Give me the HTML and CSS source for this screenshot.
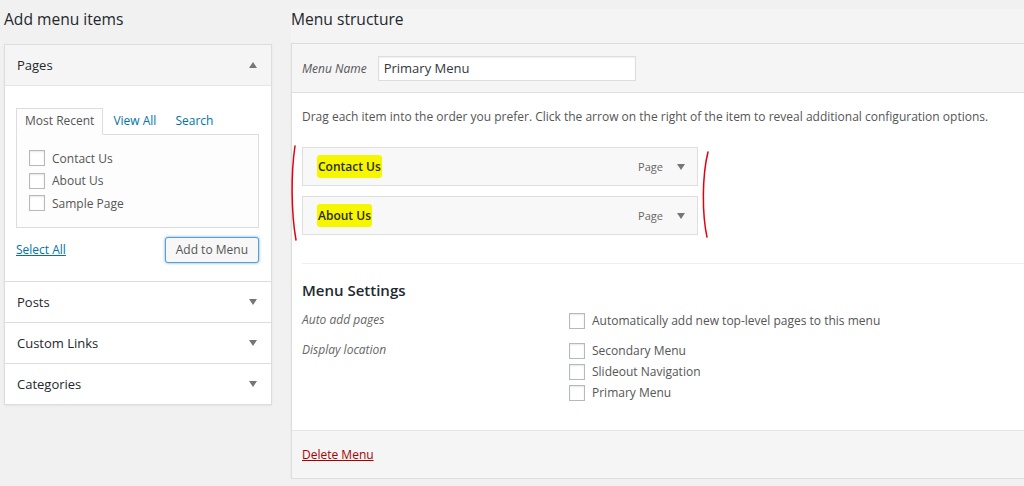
FILE: index.html
```html
<!DOCTYPE html>
<html lang="en">
<head>
    <meta charset="UTF-8">
    <title>Menus</title>
    <link rel="stylesheet" href="styles.css">
</head>
<body>
    <div class="page">
        <div class="col-left">
            <h2 class="col-title">Add menu items</h2>
            <div class="accordion">
                <div class="acc-section open">
                    <div class="acc-head">Pages <span class="arrow up"></span></div>
                    <div class="acc-body">
                        <ul class="tabs">
                            <li class="active">Most Recent</li>
                            <li><a href="#">View All</a></li>
                            <li><a href="#">Search</a></li>
                        </ul>
                        <div class="tab-panel">
                            <label class="check-row"><span class="checkbox"></span>Contact Us</label>
                            <label class="check-row"><span class="checkbox"></span>About Us</label>
                            <label class="check-row"><span class="checkbox"></span>Sample Page</label>
                        </div>
                        <div class="acc-actions">
                            <a href="#" class="select-all">Select All</a>
                            <button class="button focused">Add to Menu</button>
                        </div>
                    </div>
                </div>
                <div class="acc-section">
                    <div class="acc-head">Posts <span class="arrow"></span></div>
                </div>
                <div class="acc-section">
                    <div class="acc-head">Custom Links <span class="arrow"></span></div>
                </div>
                <div class="acc-section">
                    <div class="acc-head">Categories <span class="arrow"></span></div>
                </div>
            </div>
        </div>

        <div class="col-right">
            <h2 class="col-title">Menu structure</h2>
            <div class="menu-edit">
                <div class="menu-header">
                    <label class="menu-name-label">Menu Name</label>
                    <input type="text" class="menu-name" value="Primary Menu">
                </div>
                <div class="menu-body">
                    <p class="drag-note">Drag each item into the order you prefer. Click the arrow on the right of the item to reveal additional configuration options.</p>
                    <div class="menu-list">
                        <svg class="marks" width="430" height="110" viewBox="0 0 430 110">
                            <path d="M5,4 C1,30 1,70 6,98" />
                            <path d="M418,10 C412,34 412,72 417,95" />
                        </svg>
                        <div class="menu-item">
                            <span class="item-title"><mark>Contact Us</mark></span>
                            <span class="item-type">Page</span>
                            <span class="arrow"></span>
                        </div>
                        <div class="menu-item">
                            <span class="item-title"><mark>About Us</mark></span>
                            <span class="item-type">Page</span>
                            <span class="arrow"></span>
                        </div>
                    </div>
                    <div class="menu-settings">
                        <h3>Menu Settings</h3>
                        <div class="setting-row">
                            <span class="setting-label">Auto add pages</span>
                            <div class="setting-options">
                                <label class="check-row"><span class="checkbox"></span>Automatically add new top-level pages to this menu</label>
                            </div>
                        </div>
                        <div class="setting-row locations">
                            <span class="setting-label">Display location</span>
                            <div class="setting-options">
                                <label class="check-row"><span class="checkbox"></span>Secondary Menu</label>
                                <label class="check-row"><span class="checkbox"></span>Slideout Navigation</label>
                                <label class="check-row"><span class="checkbox"></span>Primary Menu</label>
                            </div>
                        </div>
                    </div>
                </div>
                <div class="menu-footer">
                    <a href="#" class="delete-link">Delete Menu</a>
                </div>
            </div>
        </div>
    </div>
</body>
</html>
```

FILE: styles.css
```css
body {
    margin: 0;
    background-color: #f1f1f1;
    color: #444;
    font-family: "Open Sans", "Noto Sans", sans-serif;
    font-size: 12px;
    overflow: hidden;
}

.page {
    display: flex;
    align-items: flex-start;
    width: 1100px;
}

.col-title {
    margin: 0 0 15px;
    font-size: 15.6px;
    font-weight: 400;
    line-height: 20px;
    color: #23282d;
}

/* left column */
.col-left {
    flex: none;
    width: 268px;
    margin-left: 4px;
    padding-top: 9px;
}

.accordion {
    background: #fff;
    border: 1px solid #ddd;
    box-shadow: 0 1px 2px rgba(0, 0, 0, 0.06);
}

.acc-section + .acc-section {
    border-top: 1px solid #ddd;
}

.acc-head {
    display: flex;
    align-items: center;
    justify-content: space-between;
    height: 40px;
    padding: 0 14px 0 12px;
    font-size: 13px;
    color: #23282d;
}

.open .acc-head {
    background: #f5f5f5;
    border-bottom: 1px solid #e5e5e5;
}

.arrow {
    width: 0;
    height: 0;
    border-left: 4.5px solid transparent;
    border-right: 4.5px solid transparent;
    border-top: 6px solid #72777c;
}

.arrow.up {
    border-top: none;
    border-bottom: 6px solid #72777c;
}

.acc-body {
    padding: 22px 12px 18px 11px;
}

.tabs {
    display: flex;
    margin: 0;
    padding: 0;
    list-style: none;
}

.tabs li {
    padding: 3px 8px 4px;
    border: 1px solid transparent;
    line-height: 17px;
    margin-right: 1px;
}

.tabs li.active {
    background: #fdfdfd;
    border-color: #ddd;
    border-bottom-color: #fdfdfd;
    margin-bottom: -1px;
    position: relative;
    color: #555;
}

.tabs a {
    color: #0073aa;
    text-decoration: none;
}

.tab-panel {
    background: #fdfdfd;
    border: 1px solid #ddd;
    padding: 12px 12px 12px;
}

.check-row {
    display: flex;
    align-items: center;
    height: 22.5px;
    color: #555;
}

.checkbox {
    width: 14px;
    height: 14px;
    margin-right: 7px;
    background: #fff;
    border: 1px solid #b4b9be;
    box-shadow: inset 0 1px 2px rgba(0, 0, 0, 0.1);
}

.acc-actions {
    display: flex;
    align-items: center;
    justify-content: space-between;
    margin-top: 9px;
}

.select-all {
    color: #0073aa;
    text-decoration: underline;
}

.button {
    height: 26px;
    padding: 0 10px;
    font-family: inherit;
    font-size: 12px;
    color: #555;
    background: #f7f7f7;
    border: 1px solid #5b9dd9;
    border-radius: 3px;
    box-shadow: 0 0 3px rgba(0, 115, 170, 0.6);
    cursor: pointer;
}

/* right column */
.col-right {
    flex: none;
    width: 760px;
    margin-left: 19px;
    margin-top: 9px;
    background: #f4f4f4;
}

.col-right .col-title {
    margin-bottom: 14px;
}

.menu-edit {
    background: #fff;
    border: 1px solid #ddd;
    box-shadow: 0 1px 2px rgba(0, 0, 0, 0.06);
}

.menu-header {
    display: flex;
    align-items: center;
    height: 48px;
    padding: 0 10px;
    background: #f5f5f5;
    border-bottom: 1px solid #dfdfdf;
}

.menu-name-label {
    font-style: italic;
    color: #555;
    margin-right: 11px;
}

.menu-name {
    width: 258px;
    height: 25px;
    box-sizing: border-box;
    padding: 0 5px;
    font-family: inherit;
    font-size: 13px;
    color: #32373c;
    background: #fff;
    border: 1px solid #ddd;
    box-shadow: inset 0 1px 2px rgba(0, 0, 0, 0.07);
}

.menu-body {
    padding: 0 10px 27px;
}

.drag-note {
    margin: 14px 0 20px;
    line-height: 20px;
    color: #555;
}

.menu-list {
    position: relative;
}

.marks {
    position: absolute;
    left: -12px;
    top: -5px;
    overflow: visible;
}

.marks path {
    fill: none;
    stroke: #e4000f;
    stroke-width: 1.5;
    stroke-linecap: round;
}

.menu-item {
    display: flex;
    align-items: center;
    width: 396px;
    height: 39px;
    box-sizing: border-box;
    margin-bottom: 10px;
    padding: 0 12px 0 14px;
    background: #f8f8f8;
    border: 1px solid #dfdfdf;
}

.item-title {
    flex: 1;
    font-weight: 600;
    color: #23282d;
}

.item-title mark {
    background: #f6f600;
    color: #2b2d10;
    padding: 3px 1px;
    border-radius: 3px;
}

.item-type {
    color: #666;
    font-size: 11px;
    margin-right: 14px;
}

.menu-settings {
    margin-top: 28px;
    border-top: 1px solid #eee;
}

.menu-settings h3 {
    margin: 15px 0 9px;
    font-size: 15px;
    font-weight: 600;
    line-height: 22px;
    color: #23282d;
}

.setting-row {
    display: flex;
    align-items: flex-start;
}

.setting-row.locations {
    margin-top: 9px;
}

.setting-label {
    width: 267px;
    flex: none;
    font-style: italic;
    color: #666;
    line-height: 20px;
}

.setting-row .check-row {
    height: 21px;
}

.menu-footer {
    display: flex;
    align-items: center;
    height: 47px;
    padding: 0 10px;
    background: #f5f5f5;
    border-top: 1px solid #e5e5e5;
}

.delete-link {
    color: #a00;
    text-decoration: underline;
}
```
